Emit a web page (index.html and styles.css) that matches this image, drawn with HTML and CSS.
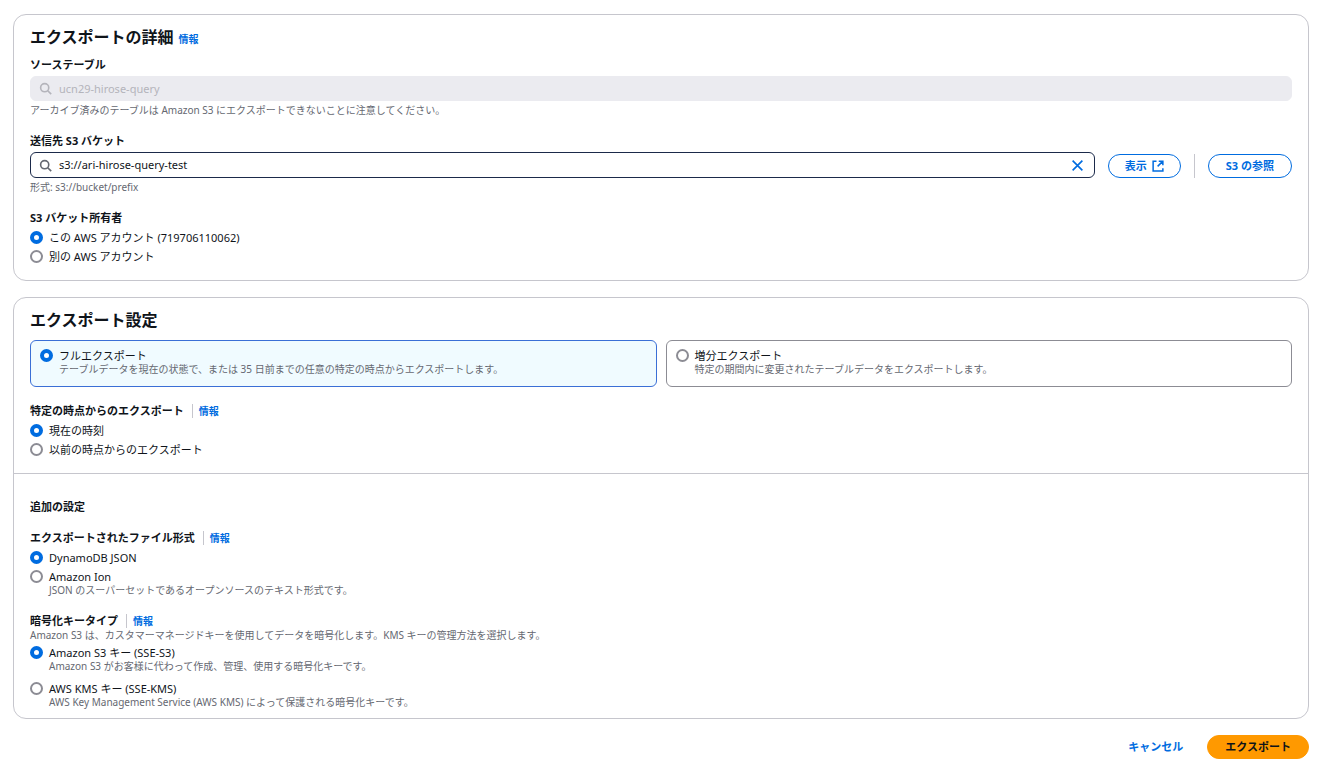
FILE: index.html
```html
<!DOCTYPE html>
<html lang="ja">
<head>
    <meta charset="UTF-8">
    <meta name="viewport" content="width=device-width, initial-scale=1.0">
    <title>S3 へのエクスポート</title>
    <link rel="stylesheet" href="styles.css">
</head>
<body>
    <form class="export-form">
        <section class="card">
            <div class="card-header">
                <h2>エクスポートの詳細</h2>
                <a class="info" href="#">情報</a>
            </div>

            <div class="field">
                <label class="field-label" for="source-table">ソーステーブル</label>
                <div class="search disabled">
                    <svg class="search-icon" viewBox="0 0 16 16"><circle cx="7" cy="7" r="5"/><path d="M10.8 10.8 15 15"/></svg>
                    <input type="text" id="source-table" value="ucn29-hirose-query" disabled>
                </div>
                <p class="hint">アーカイブ済みのテーブルは Amazon S3 にエクスポートできないことに注意してください。</p>
            </div>

            <div class="field">
                <label class="field-label" for="bucket">送信先 S3 バケット</label>
                <div class="bucket-row">
                    <div class="search">
                        <svg class="search-icon" viewBox="0 0 16 16"><circle cx="7" cy="7" r="5"/><path d="M10.8 10.8 15 15"/></svg>
                        <input type="text" id="bucket" value="s3://ari-hirose-query-test">
                        <button type="button" class="clear" aria-label="クリア">
                            <svg viewBox="0 0 16 16"><path d="m2 2 12 12M14 2 2 14"/></svg>
                        </button>
                    </div>
                    <button type="button" class="btn with-icon">表示
                        <svg viewBox="0 0 16 16"><path d="M6 1.5H1.5v13h13V11M9 1.5h5.5V7M14.5 1.5 7.5 8.5"/></svg>
                    </button>
                    <span class="divider"></span>
                    <button type="button" class="btn">S3 の参照</button>
                </div>
                <p class="hint">形式: s3://bucket/prefix</p>
            </div>

            <fieldset class="field">
                <legend class="field-label">S3 バケット所有者</legend>
                <div class="radios">
                    <label class="radio"><input type="radio" name="owner" checked><span>この AWS アカウント (719706110062)</span></label>
                    <label class="radio"><input type="radio" name="owner"><span>別の AWS アカウント</span></label>
                </div>
            </fieldset>
        </section>

        <section class="card">
            <div class="card-header">
                <h2>エクスポート設定</h2>
            </div>

            <div class="tiles">
                <label class="radio tile">
                    <input type="radio" name="export-type" checked>
                    <span>フルエクスポート<small>テーブルデータを現在の状態で、または 35 日前までの任意の特定の時点からエクスポートします。</small></span>
                </label>
                <label class="radio tile">
                    <input type="radio" name="export-type">
                    <span>増分エクスポート<small>特定の期間内に変更されたテーブルデータをエクスポートします。</small></span>
                </label>
            </div>

            <fieldset class="field">
                <legend class="field-label">特定の時点からのエクスポート<a class="info separated" href="#">情報</a></legend>
                <div class="radios">
                    <label class="radio"><input type="radio" name="point" checked><span>現在の時刻</span></label>
                    <label class="radio"><input type="radio" name="point"><span>以前の時点からのエクスポート</span></label>
                </div>
            </fieldset>

            <div class="additional">
                <h3>追加の設定</h3>

                <fieldset class="field">
                    <legend class="field-label">エクスポートされたファイル形式<a class="info separated" href="#">情報</a></legend>
                    <div class="radios">
                        <label class="radio"><input type="radio" name="format" checked><span>DynamoDB JSON</span></label>
                        <label class="radio"><input type="radio" name="format"><span>Amazon Ion<small>JSON のスーパーセットであるオープンソースのテキスト形式です。</small></span></label>
                    </div>
                </fieldset>

                <fieldset class="field">
                    <legend class="field-label">暗号化キータイプ<a class="info separated" href="#">情報</a></legend>
                    <p class="hint">Amazon S3 は、カスタマーマネージドキーを使用してデータを暗号化します。KMS キーの管理方法を選択します。</p>
                    <div class="radios spaced">
                        <label class="radio"><input type="radio" name="key" checked><span>Amazon S3 キー (SSE-S3)<small>Amazon S3 がお客様に代わって作成、管理、使用する暗号化キーです。</small></span></label>
                        <label class="radio"><input type="radio" name="key"><span>AWS KMS キー (SSE-KMS)<small>AWS Key Management Service (AWS KMS) によって保護される暗号化キーです。</small></span></label>
                    </div>
                </fieldset>
            </div>
        </section>

        <div class="actions">
            <a class="cancel" href="#">キャンセル</a>
            <button type="submit" class="btn primary">エクスポート</button>
        </div>
    </form>
</body>
</html>
```
FILE: styles.css
```css
* {
    margin: 0;
    padding: 0;
    box-sizing: border-box;
}

body {
    padding: 14px 12px 8px 13px;
    background: #fff;
    color: #0f141a;
    font-family: "Noto Sans", "Noto Sans CJK JP", sans-serif;
    font-size: 11px;
    line-height: 14px;
}

input, button {
    font: inherit;
    color: inherit;
}

a {
    color: #006ce0;
    text-decoration: none;
}

svg {
    fill: none;
    stroke: currentColor;
    stroke-width: 2;
}

.card {
    padding: 10px 16px 16px;
    border: 1px solid #c6c6cd;
    border-radius: 13px;
    margin-bottom: 16px;
}

.card-header {
    display: flex;
    align-items: baseline;
    gap: 5px;
    margin-bottom: 8px;
}

h2 {
    font-size: 16px;
    line-height: 24px;
}

h3 {
    font-size: 11px;
    line-height: 16px;
    margin-bottom: 15px;
}

.info {
    font-size: 10px;
    font-weight: 700;
}

.info.separated {
    margin-left: 8px;
    padding-left: 6px;
    border-left: 1px solid #c6c6cd;
}

.field + .field {
    margin-top: 16px;
}

fieldset {
    border: none;
}

.field-label {
    display: block;
    font-weight: 700;
    line-height: 16px;
}

.hint,
.radio small {
    display: block;
    color: #656871;
    font-size: 10px;
    line-height: 12px;
}

.search + .hint,
.bucket-row + .hint {
    margin-top: 2px;
    line-height: 14px;
}

/* inputs */
.search {
    flex: 1;
    display: flex;
    align-items: center;
    gap: 7px;
    height: 26px;
    margin-top: 3px;
    padding: 0 10px 0 8px;
    border: 1px solid #1b2a4a;
    border-radius: 6px;
}

.search.disabled {
    height: 25px;
    background: #ebebf0;
    border-color: #ebebf0;
    color: #b4b4bb;
}

.search input {
    flex: 1;
    min-width: 0;
    border: none;
    outline: none;
    background: none;
}

.search-icon {
    width: 13px;
    height: 13px;
    color: #656871;
}

.disabled .search-icon {
    color: #b4b4bb;
}

.clear {
    display: flex;
    border: none;
    background: none;
    color: #006ce0;
    cursor: pointer;
}

.clear svg {
    width: 13px;
    height: 13px;
}

.bucket-row {
    display: flex;
    align-items: center;
    gap: 13px;
}

.divider {
    width: 1px;
    height: 24px;
    background: #c6c6cd;
}

.btn {
    display: flex;
    align-items: center;
    gap: 5px;
    height: 24px;
    padding: 0 17px;
    border: 1px solid #006ce0;
    border-radius: 12px;
    background: #fff;
    color: #006ce0;
    font-weight: 700;
    cursor: pointer;
}

.btn.with-icon {
    padding: 0 16px;
}

.bucket-row .btn,
.bucket-row .divider {
    margin-top: 4px;
}

.btn svg {
    width: 12px;
    height: 12px;
}

/* radios */
.radios {
    display: flex;
    flex-direction: column;
    gap: 5px;
    padding-top: 5px;
}

.radios.spaced {
    gap: 10px;
}

.radio {
    display: flex;
    align-items: flex-start;
    gap: 6px;
}

.radio input {
    appearance: none;
    flex: none;
    width: 13px;
    height: 13px;
    border: 2px solid #8c8c94;
    border-radius: 50%;
    background: #fff;
}

.radio input:checked {
    border: 4px solid #006ce0;
}

.tiles {
    display: grid;
    grid-template-columns: 1fr 1fr;
    gap: 9px;
    margin-bottom: 16px;
}

.tile {
    padding: 8px 9px 11px;
    border: 1px solid #8c8c94;
    border-radius: 6px;
}

.tile:has(input:checked) {
    border-color: #3b6fd6;
    background: #f0fbff;
}

.additional {
    margin: 16px -16px -6px;
    padding: 25px 16px 0;
    border-top: 1px solid #c6c6cd;
}

.additional .field + .field {
    margin-top: 17px;
}

/* footer */
.actions {
    display: flex;
    justify-content: flex-end;
    align-items: center;
    gap: 24px;
}

.cancel {
    font-weight: 700;
}

.btn.primary {
    border-color: #ff9900;
    background: #ff9900;
    color: #0f141a;
}
```
